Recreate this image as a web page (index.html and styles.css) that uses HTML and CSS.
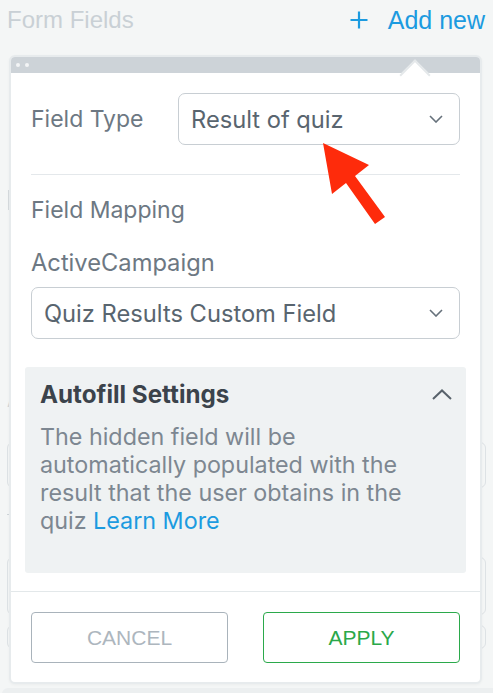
FILE: index.html
```html
<!DOCTYPE html>
<html>
<head>
<meta charset="utf-8">
<link rel="stylesheet" href="styles.css">
</head>
<body>
<header class="top">
  <h1 class="top-title">Form Fields</h1>
  <a class="add-new" href="#"><svg class="plus" width="18" height="18" viewBox="0 0 18 18"><path d="M9 0.5V17.5M0.5 9H17.5" stroke="currentColor" stroke-width="2.2" fill="none"/></svg><span>Add new</span></a>
</header>

<div class="bg-list">
  <div class="bg-handle"></div>
  <div class="bg-label">A</div>
  <div class="bg-input"></div>
  <div class="bg-dash"></div>
  <div class="bg-input tall"></div>
  <div class="bg-input small"></div>
</div>
<div class="bg-bottom"></div>

<div class="popup">
  <div class="popup-bar"><span class="dot"></span><span class="dot"></span></div>
  <div class="caret"></div>
  <div class="popup-body">
    <div class="type-row">
      <div class="label">Field Type</div>
      <div class="select">
        <span>Result of quiz</span>
        <svg class="chev" width="14" height="8" viewBox="0 0 14 8"><path d="M1 1L7 7L13 1" stroke="#66717b" stroke-width="1.6" fill="none"/></svg>
      </div>
    </div>
    <div class="divider"></div>
    <div class="label section">Field Mapping</div>
    <div class="label sub">ActiveCampaign</div>
    <div class="select full">
      <span>Quiz Results Custom Field</span>
      <svg class="chev" width="14" height="8" viewBox="0 0 14 8"><path d="M1 1L7 7L13 1" stroke="#66717b" stroke-width="1.6" fill="none"/></svg>
    </div>
    <div class="autofill">
      <div class="af-head">
        <span class="af-title">Autofill Settings</span>
        <svg width="20" height="11" viewBox="0 0 20 11"><path d="M1 10L10 1.5L19 10" stroke="#58626b" stroke-width="2" fill="none"/></svg>
      </div>
      <p class="af-text">The hidden field will be automatically populated with the result that the user obtains in the quiz <a href="#">Learn More</a></p>
    </div>
  </div>
  <div class="popup-foot">
    <button class="btn cancel">CANCEL</button>
    <button class="btn apply">APPLY</button>
  </div>
</div>

<svg class="arrow" width="493" height="693" viewBox="0 0 493 693">
  <polygon points="323,143 332,194 346,183 375,224 385,217 355,176 369,165" fill="#fe2b0b"/>
</svg>
</body>
</html>
```

FILE: styles.css
```css
* { box-sizing: border-box; }
html, body { margin: 0; padding: 0; }
body {
  background: #f4f6f6;
  width: 493px;
  height: 693px;
  overflow: hidden;
  position: relative;
  font-family: Inter, "Noto Sans", sans-serif;
}

.top {
  display: flex;
  justify-content: space-between;
  align-items: center;
  height: 40px;
  padding: 0 8px 0 7px;
}
.top-title {
  margin: 0;
  font-family: "Liberation Sans", Arial, sans-serif;
  font-weight: normal;
  font-size: 24px;
  color: #c9d0d5;
}
.add-new {
  display: flex;
  align-items: center;
  gap: 20px;
  color: #1c9be0;
  text-decoration: none;
  font-family: "Liberation Sans", Arial, sans-serif;
  font-size: 25px;
}

.bg-list {
  padding: 150px 7px 0 7px;
  display: flex;
  flex-direction: column;
}
.bg-handle { width: 2px; height: 20px; background: #d6dbde; margin-left: 1px; }
.bg-label { margin-top: 180px; color: #d2d7da; font-size: 18px; height: 22px; }
.bg-input { margin-top: 30px; height: 46px; border: 1px solid #dde2e5; border-radius: 6px; }
.bg-dash { margin-top: 26px; width: 4px; height: 1px; background: #cfd5d9; }
.bg-input.tall { margin-top: 42px; height: 58px; }
.bg-input.small { margin-top: 10px; height: 24px; }
.bg-bottom {
  position: absolute;
  left: 2px; right: 0; top: 688px; height: 10px;
  background: #eceff0;
  border-radius: 6px 0 0 0;
}

.popup {
  position: absolute;
  left: 9px;
  top: 55px;
  width: 473px;
  border: 2px solid #e7ebed;
  border-radius: 6px;
  background: #fff;
  box-shadow: 0 1px 3px rgba(0,0,0,0.04);
}
.popup-bar {
  height: 16px;
  background: #cdd3d8;
  border-radius: 4px 4px 0 0;
  display: flex;
  align-items: center;
  gap: 5px;
  padding-left: 5px;
}
.dot { width: 4px; height: 4px; border-radius: 50%; background: #f3f5f6; }
.caret {
  position: absolute;
  left: 393px;
  top: 7px;
  width: 22px;
  height: 22px;
  background: #fff;
  border-left: 2px solid #e4e8ea;
  border-top: 2px solid #e4e8ea;
  transform: rotate(45deg);
}
.popup-body {
  position: relative;
  padding: 20px 20px 18px;
}
.type-row {
  display: grid;
  grid-template-columns: 147px 1fr;
  align-items: center;
}
.label {
  font-size: 23px;
  color: #6d7883;
  line-height: 28px;
}
.select {
  height: 52px;
  border: 1px solid #c8ced3;
  border-radius: 7px;
  display: flex;
  align-items: center;
  justify-content: space-between;
  padding: 0 16px 0 12px;
  font-size: 23.7px;
  color: #59656f;
}
.select.full { margin-top: 10px; }
.divider { height: 1px; background: #e4e8eb; margin: 29px 0 21px; }
.label.sub { margin-top: 25px; font-size: 23.7px; }

.autofill {
  margin: 28px -6px 0;
  background: #eff2f3;
  border-radius: 3px;
  padding: 13px 14px 38px 15px;
}
.af-head {
  display: flex;
  justify-content: space-between;
  align-items: center;
  height: 28px;
}
.af-title { font-size: 24.2px; font-weight: 700; color: #3b434b; }
.af-text {
  margin: 15px 0 0;
  max-width: 380px;
  font-size: 23.3px;
  line-height: 28px;
  color: #7d8791;
}
.af-text a { color: #1c9be0; text-decoration: none; }

.popup-foot {
  border-top: 1px solid #e3e8ea;
  padding: 20px 20px 19px;
  display: grid;
  grid-template-columns: 1fr 1fr;
  gap: 35px;
}
.btn {
  height: 51px;
  background: #fff;
  border-radius: 4px;
  font-family: "Liberation Sans", Arial, sans-serif;
  font-size: 21px;
}
.cancel { border: 1px solid #a9b3bb; color: #adb6be; }
.apply { border: 1px solid #2ba94b; color: #2aa84a; }

.arrow { position: absolute; left: 0; top: 0; pointer-events: none; }
```
